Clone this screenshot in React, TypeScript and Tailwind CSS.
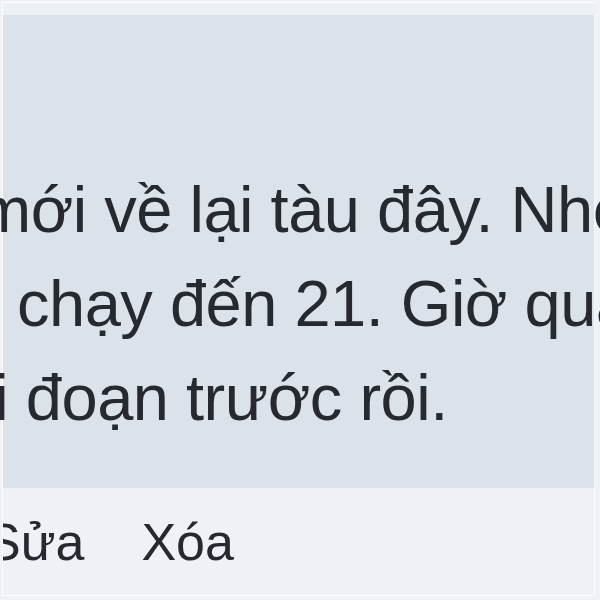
import React from 'react';

const lines = [
  { text: 'mới về lại tàu đây. Nhé anh', offset: 'ml-[-26px]' },
  { text: 'Tàu chạy đến 21. Giờ qua', offset: 'ml-[-114px]' },
  { text: 'thời đoạn trước rồi.', offset: 'ml-[-104px]' },
];

const App: React.FC = () => {
  return (
    <div className="h-[600px] w-[600px] overflow-hidden bg-[#eef1f5] font-['Liberation_Sans',Arial,sans-serif] text-[#262930]">
      <div className="ml-[2px] mt-[2px] flex h-[594px] w-[593px] flex-col border-l border-t border-[#fbfcfd]">
        <div className="h-[12px] bg-[#edf0f5]" />
        <div className="flex h-[473px] flex-col border-r border-[#f7f8fa] bg-[#dce2ea] pt-[148px]">
          {lines.map((l) => (
            <div key={l.text} className={`whitespace-nowrap text-[65px] leading-[94px] tracking-[-0.5px] ${l.offset}`}>
              {l.text}
            </div>
          ))}
        </div>
        <div className="flex flex-1 items-start overflow-hidden border-b border-r border-[#fbfcfd] bg-[#eef2f6] pt-[24px]">
          <div className="ml-[-17px] flex gap-[57px] whitespace-nowrap text-[52px] leading-[60px]">
            <span>Sửa</span>
            <span>Xóa</span>
          </div>
        </div>
      </div>
    </div>
  );
};

export default App;
